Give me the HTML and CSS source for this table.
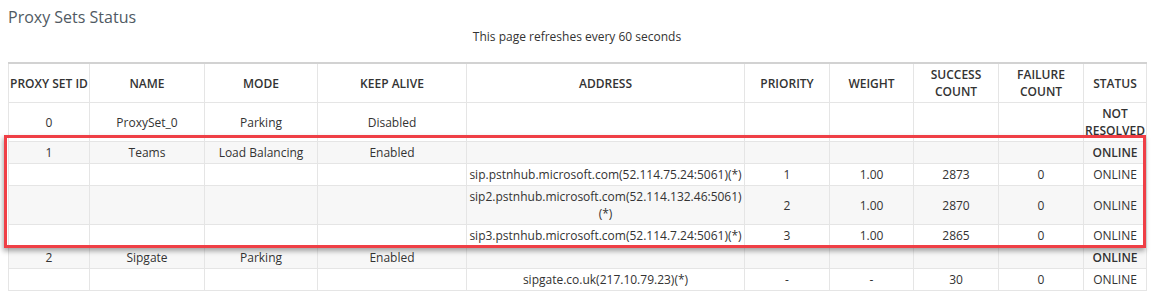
FILE: index.html
```html
<!DOCTYPE html>
<html>
<head>
<meta charset="utf-8">
<link rel="stylesheet" href="styles.css">
</head>
<body>
<h1 class="title">Proxy Sets Status</h1>
<p class="refresh">This page refreshes every 60 seconds</p>
<div class="table-wrap">
<table class="status">
<colgroup>
<col class="c-id"><col class="c-name"><col class="c-mode"><col class="c-keep"><col class="c-addr"><col class="c-prio"><col class="c-weight"><col class="c-succ"><col class="c-fail"><col class="c-status">
</colgroup>
<thead>
<tr><th>PROXY SET ID</th><th>NAME</th><th>MODE</th><th>KEEP ALIVE</th><th>ADDRESS</th><th>PRIORITY</th><th>WEIGHT</th><th>SUCCESS COUNT</th><th>FAILURE COUNT</th><th>STATUS</th></tr>
</thead>
<tbody>
<tr><td>0</td><td>ProxySet_0</td><td>Parking</td><td>Disabled</td><td></td><td></td><td></td><td></td><td></td><td class="strong">NOT RESOLVED</td></tr>
<tr><td>1</td><td>Teams</td><td>Load Balancing</td><td>Enabled</td><td></td><td></td><td></td><td></td><td></td><td class="strong">ONLINE</td></tr>
<tr><td></td><td></td><td></td><td></td><td>sip.pstnhub.microsoft.com(52.114.75.24:5061)(*)</td><td>1</td><td>1.00</td><td>2873</td><td>0</td><td>ONLINE</td></tr>
<tr><td></td><td></td><td></td><td></td><td>sip2.pstnhub.microsoft.com(52.114.132.46:5061)(*)</td><td>2</td><td>1.00</td><td>2870</td><td>0</td><td>ONLINE</td></tr>
<tr><td></td><td></td><td></td><td></td><td>sip3.pstnhub.microsoft.com(52.114.7.24:5061)(*)</td><td>3</td><td>1.00</td><td>2865</td><td>0</td><td>ONLINE</td></tr>
<tr><td>2</td><td>Sipgate</td><td>Parking</td><td>Enabled</td><td></td><td></td><td></td><td></td><td></td><td class="strong">ONLINE</td></tr>
<tr><td></td><td></td><td></td><td></td><td>sipgate.co.uk(217.10.79.23)(*)</td><td>-</td><td>-</td><td>30</td><td>0</td><td>ONLINE</td></tr>
</tbody>
</table>
<div class="highlight"></div>
</div>
</body>
</html>
```
FILE: styles.css
```css
html, body {
  margin: 0;
  padding: 0;
  background: #ffffff;
}
body {
  padding: 0 8px;
  font-family: "Open Sans", "Liberation Sans", sans-serif;
  color: #333333;
}
.title {
  margin: 7px 0 0 0;
  font-size: 16px;
  line-height: 20px;
  font-weight: 400;
  color: #505a63;
}
.refresh {
  margin: 2px 0 0 0;
  font-size: 12px;
  line-height: 16px;
  text-align: center;
  color: #333333;
}
.table-wrap {
  position: relative;
  margin-top: 17px;
}
.status {
  width: 100%;
  table-layout: fixed;
  border-collapse: collapse;
  font-size: 12px;
  line-height: 17px;
  border-top: 2px solid #d2d2d2;
}
.c-id { width: 81px; }
.c-name { width: 115px; }
.c-mode { width: 113px; }
.c-keep { width: 149px; }
.c-addr { width: 278px; }
.c-prio { width: 85px; }
.c-weight { width: 84px; }
.c-succ { width: 85px; }
.c-fail { width: 85px; }
.c-status { width: 63px; }
.status th, .status td {
  border: 1px solid #e5e5e5;
  padding: 2px 0;
  text-align: center;
  vertical-align: middle;
}
.status th {
  font-weight: 600;
  color: #333333;
}
.status thead tr th {
  border-top: none;
}
.status tbody tr:nth-child(even) td {
  background: #f7f7f7;
}
.status td.strong {
  font-weight: 600;
}
.highlight {
  position: absolute;
  left: -4px;
  top: 73px;
  width: 1136px;
  height: 107px;
  border: 3px solid #ef3f46;
  box-shadow: -1px 3px 5px rgba(0, 0, 0, 0.35);
  pointer-events: none;
}
```
